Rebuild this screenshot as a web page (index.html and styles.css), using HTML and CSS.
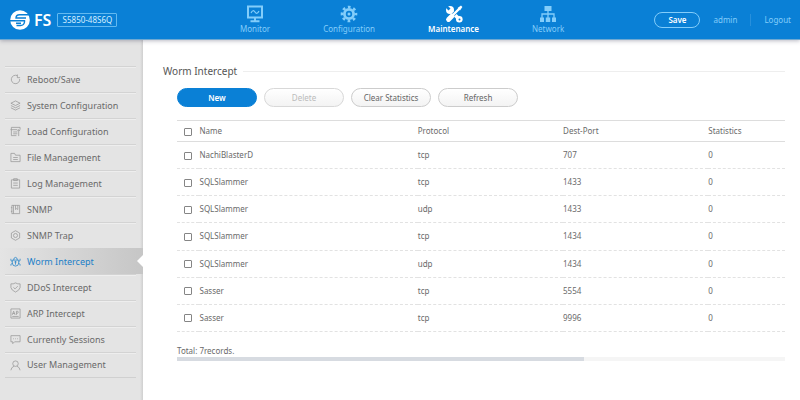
FILE: index.html
```html
<!DOCTYPE html>
<html lang="en">
<head>
<meta charset="utf-8">
<title>Worm Intercept</title>
<link rel="stylesheet" href="styles.css">
</head>
<body>
<header class="topbar">
  <div class="brand">
    <svg class="logo" viewBox="0 0 20 20" aria-hidden="true"><circle cx="10" cy="10" r="9.8" fill="#fff"/><path d="M20 4.800H9.500Q6 4.800 6 8H16M0 10.800H14.500V12Q14 15.500 10.500 15.500H6.500M6 13.200H11" fill="none" stroke="#0a80d6" stroke-width="1.400"/></svg>
    <span class="brand-name">FS</span>
    <span class="model">S5850-48S6Q</span>
  </div>
  <nav class="tabs">
    <a class="tab" href="#monitor">
      <svg viewBox="0 0 18 18"><path d="M2 1.500H16V12.500H2ZM9 13V16M4.500 16.200H13.500" fill="none" stroke="currentColor" stroke-width="2"/><path d="M5 8Q7 4 9 7T13 6" fill="none" stroke="currentColor" stroke-width="1.200"/></svg>
      <span>Monitor</span></a>
    <a class="tab" href="#configuration">
      <svg viewBox="0 0 18 18"><circle cx="9" cy="9" r="4.600" fill="none" stroke="currentColor" stroke-width="2.800"/><circle cx="9" cy="9" r="7" fill="none" stroke="currentColor" stroke-width="2.600" stroke-dasharray="2.700 2.798" stroke-dashoffset="1.350"/><circle cx="9" cy="9" r="1.500" fill="currentColor"/></svg>
      <span>Configuration</span></a>
    <a class="tab active" href="#maintenance">
      <svg viewBox="0 0 18 18"><path d="M5.500 5.500L14 14" stroke="currentColor" stroke-width="3.800"/><circle cx="5" cy="5" r="4" fill="currentColor"/><path d="M0 2L2 0L5.500 3.500L3.500 5.500Z" fill="#0a80d6"/><circle cx="14.300" cy="14.300" r="3.300" fill="currentColor"/><circle cx="14.500" cy="14.500" r="1" fill="#0a80d6"/><path d="M14 4L6 12" stroke="#0a80d6" stroke-width="3.600"/><path d="M14.500 3.500L8 10" stroke="currentColor" stroke-width="2.400"/><path d="M12.600 3L16 .6L17.400 2L15 5.400Z" fill="currentColor"/><path d="M7 11L3.500 14.500" stroke="currentColor" stroke-width="4.800" stroke-linecap="round"/></svg>
      <span>Maintenance</span></a>
    <a class="tab" href="#network">
      <svg viewBox="0 0 18 18"><path d="M5.500 1H12.500V6H5.500ZM1 12.500H5V17H1ZM6.800 12.500H11.200V17H6.800ZM13 12.500H17V17H13Z" fill="currentColor"/><path d="M9 6V13M3 13V9H15V13" fill="none" stroke="currentColor" stroke-width="1.300"/></svg>
      <span>Network</span></a>
  </nav>
  <div class="account">
    <button class="save" type="button">Save</button>
    <a class="user" href="#admin">admin</a>
    <a class="logout" href="#logout">Logout</a>
  </div>
</header>
<div class="layout">
  <aside class="sidebar">
    <ul class="menu">
      <li><a href="#reboot"><svg viewBox="0 0 12 12"><path d="M8 1.800A4.600 4.600 0 1 0 10.600 5.500M8 .5V4H11"/></svg>Reboot/Save</a></li>
      <li><a href="#system"><svg viewBox="0 0 12 12"><path d="M6 1L11 3.500L6 6L1 3.500ZM1 6L6 8.500L11 6M1 8.500L6 11L11 8.500"/></svg>System Configuration</a></li>
      <li><a href="#load"><svg viewBox="0 0 12 12"><path d="M1.500 4V1.500H11V4M.5 4H8M1.500 4V10.500H7M3.500 6.500H8M3.500 8.500H8M9.500 11V4M8 5.500L9.500 4L11 5.500"/></svg>Load Configuration</a></li>
      <li><a href="#file"><svg viewBox="0 0 12 12"><path d="M1 10.500V1.500H5L6 3.500H11V10.500ZM3.500 6H8.500M3.500 8.200H8.500"/></svg>File Management</a></li>
      <li><a href="#log"><svg viewBox="0 0 12 12"><path d="M1.500 2H10.500V11H1.500ZM4 .8H8V2.800H4ZM3.500 5.500H8.500M3.500 8H8.500"/></svg>Log Management</a></li>
      <li><a href="#snmp"><svg viewBox="0 0 12 12"><path d="M2 1.500H10.500V10.500H2ZM3.800 1.500V10.500M6 1.500V6L7.300 5L8.500 6V1.500M1 4H2.500M1 8H2.500"/></svg>SNMP</a></li>
      <li><a href="#trap"><svg viewBox="0 0 12 12"><path d="M6 .8L10.500 3.300V8.700L6 11.200L1.500 8.700V3.300Z"/><circle cx="6" cy="6" r="2.200"/></svg>SNMP Trap</a></li>
      <li class="current"><a href="#worm" aria-current="page"><svg viewBox="0 0 12 12"><path d="M2.500 4.500H9.500V7.500Q9.500 11 6 11Q2.500 11 2.500 7.500ZM4 4.500Q4 1.500 6 1.500Q8 1.500 8 4.500M6 5.500V9.500M4.800 6.500H7.200M1 3V5L2.500 6M11 3V5L9.500 6M1 10.500V9L2.500 8M11 10.500V9L9.500 8"/></svg>Worm Intercept</a></li>
      <li><a href="#ddos"><svg viewBox="0 0 12 12"><path d="M6 1Q8.500 2.500 11 2V6Q10.500 9 6 11Q1.500 9 1 6V2Q3.500 2.500 6 1ZM3.700 5.800L5.500 7.500L8.500 4.500"/></svg>DDoS Intercept</a></li>
      <li><a href="#arp"><svg viewBox="0 0 12 12"><path d="M1 1H11V11H1ZM2.500 7.500L4 3.500L5.500 7.500M3 6H5M7 7.500V3.500H8.500Q9.500 4.500 8.500 5.700H7M2.500 9.200H9.500"/></svg>ARP Intercept</a></li>
      <li><a href="#sessions"><svg viewBox="0 0 12 12"><path d="M1 1.800H11V8.500H5L3 10.500V8.500H1ZM3.500 5.200H4.300M5.600 5.200H6.400M7.700 5.200H8.500"/></svg>Currently Sessions</a></li>
      <li><a href="#users"><svg viewBox="0 0 12 12"><circle cx="6" cy="4" r="3"/><path d="M4.500 6.700Q1.200 8 1 11.200M7.500 6.700Q10.800 8 11 11.200"/></svg>User Management</a></li>
    </ul>
  </aside>
  <main class="content">
    <h1 class="title">Worm Intercept</h1>
    <div class="panel">
      <div class="actions">
        <button class="btn primary" type="button">New</button>
        <button class="btn" type="button" disabled>Delete</button>
        <button class="btn" type="button">Clear Statistics</button>
        <button class="btn" type="button">Refresh</button>
      </div>
      <table class="rules">
        <colgroup><col class="c-check"><col class="c-name"><col class="c-mid"><col class="c-mid"><col></colgroup>
        <thead><tr><th><input type="checkbox" aria-label="Select all"></th><th>Name</th><th>Protocol</th><th>Dest-Port</th><th>Statistics</th></tr></thead>
        <tbody>
          <tr><td><input type="checkbox" id="r1"></td><td><label for="r1">NachiBlasterD</label></td><td>tcp</td><td>707</td><td>0</td></tr>
          <tr><td><input type="checkbox" id="r2"></td><td><label for="r2">SQLSlammer</label></td><td>tcp</td><td>1433</td><td>0</td></tr>
          <tr><td><input type="checkbox" id="r3"></td><td><label for="r3">SQLSlammer</label></td><td>udp</td><td>1433</td><td>0</td></tr>
          <tr><td><input type="checkbox" id="r4"></td><td><label for="r4">SQLSlammer</label></td><td>tcp</td><td>1434</td><td>0</td></tr>
          <tr><td><input type="checkbox" id="r5"></td><td><label for="r5">SQLSlammer</label></td><td>udp</td><td>1434</td><td>0</td></tr>
          <tr><td><input type="checkbox" id="r6"></td><td><label for="r6">Sasser</label></td><td>tcp</td><td>5554</td><td>0</td></tr>
          <tr><td><input type="checkbox" id="r7"></td><td><label for="r7">Sasser</label></td><td>tcp</td><td>9996</td><td>0</td></tr>
        </tbody>
      </table>
      <p class="total">Total: 7records.</p>
      <div class="scroll"><div class="thumb"></div></div>
    </div>
  </main>
</div>
</body>
</html>
```
FILE: styles.css
```css
* { box-sizing: border-box; }
body {
  margin: 0;
  min-height: 100vh;
  display: flex;
  flex-direction: column;
  background: #fff;
  color: #6a6a6a;
  font: 8px/12px "Noto Sans", "Open Sans", sans-serif;
}
a { color: inherit; text-decoration: none; }
button { font: inherit; padding: 0; }

.topbar {
  position: relative;
  z-index: 1;
  display: grid;
  grid-template-columns: 240px 1fr auto;
  height: 40px;
  background: #0a80d6;
  border-bottom: 1px solid #6fa9d2;
  box-shadow: 0 1px 4px rgba(60, 60, 90, .35);
  color: #83cdfa;
}
.brand { display: flex; align-items: center; padding-left: 10px; }
.logo { width: 20px; height: 20px; }
.brand-name { margin-left: 4px; color: #fff; font-size: 16px; font-weight: 600; line-height: 20px; }
.model {
  margin-left: 6px;
  width: 60px;
  border: 1px solid #63b9f0;
  border-radius: 1px;
  color: #d5efff;
  text-align: center;
}
.tabs { display: flex; gap: 53px; padding-top: 5px; }
.tab { display: flex; flex-direction: column; align-items: center; }
.tab svg { width: 18px; height: 18px; }
.tab.active { color: #fff; font-weight: 600; }
.account { display: flex; align-items: center; padding-right: 9px; }
.save {
  width: 46px;
  height: 16px;
  border: 1px solid #83cdfa;
  border-radius: 8px;
  background: none;
  color: #fff;
  font-weight: 600;
}
.user { margin-left: 13px; padding-right: 13px; border-right: 1px solid #2890dc; }
.logout { padding-left: 13px; }

.layout { flex: 1; display: flex; }
.sidebar {
  width: 143px;
  padding-top: 26px;
  background: linear-gradient(to left, #cfcfcf, #e4e4e4 3px);
}
.menu { margin: 0; padding: 0; list-style: none; font-size: 9px; }
.menu li { height: 26px; }
.menu a {
  display: flex;
  align-items: center;
  gap: 6px;
  height: 100%;
  margin: 0 7px 0 5px;
  padding-left: 5px;
  border-top: 1px solid #d3d3d3;
  box-shadow: inset 0 1px #eee;
}
.menu li:last-child a { border-bottom: 1px solid #d0d0d0; }
.menu svg { width: 11px; height: 11px; fill: none; stroke: #959595; stroke-width: .8; }
.menu .current {
  position: relative;
  background: linear-gradient(to right, #e4e4e4, #c6c6c6);
  color: #1c7fc8;
}
.menu .current a { border-top-color: transparent; box-shadow: none; }
.menu .current svg { stroke: #1c7fc8; }
.menu .current::after {
  content: "";
  position: absolute;
  right: 0;
  top: 7px;
  border: 6px solid transparent;
  border-left-width: 0;
  border-right-color: #fff;
}

.content { flex: 1; padding: 24px 15px 0 20px; }
.title {
  display: flex;
  align-items: center;
  gap: 6px;
  margin: 0;
  color: #555;
  font-size: 10px;
  font-weight: 400;
  line-height: 14px;
}
.title::after { content: ""; flex: 1; height: 1px; background: #eee; }
.panel { padding: 10px 0 0 14px; }
.actions { display: flex; gap: 7px; }
.btn {
  width: 80px;
  height: 19px;
  border: 1px solid #ccc;
  border-radius: 10px;
  background: linear-gradient(#fff, #f3f3f3);
  color: #666;
}
.btn:disabled { color: #bbb; border-color: #d8d8d8; }
.btn.primary { border-color: #0a80d6; background: #0a80d6; color: #fff; font-weight: 600; }
.rules {
  width: 100%;
  height: 212px;
  margin-top: 13px;
  border-collapse: collapse;
  table-layout: fixed;
}
.c-check { width: 3.700%; }
.c-name { width: 35.900%; }
.c-mid { width: 23.900%; }
.rules th, .rules td { padding: 0; font-weight: 400; text-align: left; vertical-align: middle; }
.rules th { height: 21px; border: solid #ddd; border-width: 1px 0; }
.rules td { border-bottom: 1px dashed #e2e2e2; }
.rules input {
  appearance: none;
  display: block;
  width: 8px;
  height: 8px;
  margin: 1px 0 0 7px;
  border: 1px solid #858585;
  border-radius: 1px;
}
.total { margin: 13px 0 0; }
.scroll { height: 4px; background: #f5f5f5; }
.thumb { width: 67%; height: 100%; background: #d7dbe1; }
```
